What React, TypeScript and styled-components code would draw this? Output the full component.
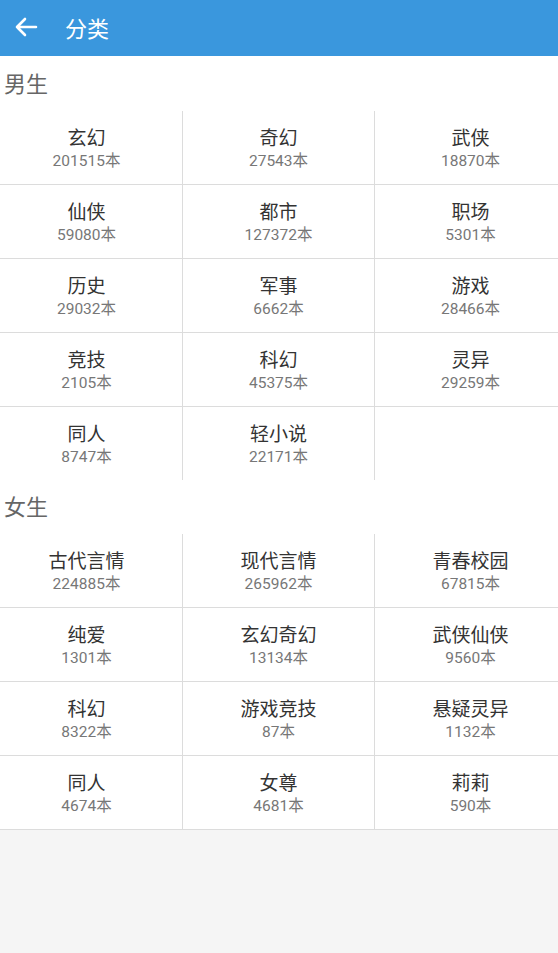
import React from "react";
import styled, { createGlobalStyle } from "styled-components";

const GlobalStyle = createGlobalStyle`
  html, body {
    margin: 0;
    padding: 0;
    background: #f5f5f5;
    font-family: Roboto, "Noto Sans CJK SC", sans-serif;
  }
`;

const sections = [
  {
    title: "男生",
    items: [
      ["玄幻", 201515],
      ["奇幻", 27543],
      ["武侠", 18870],
      ["仙侠", 59080],
      ["都市", 127372],
      ["职场", 5301],
      ["历史", 29032],
      ["军事", 6662],
      ["游戏", 28466],
      ["竞技", 2105],
      ["科幻", 45375],
      ["灵异", 29259],
      ["同人", 8747],
      ["轻小说", 22171],
    ],
  },
  {
    title: "女生",
    items: [
      ["古代言情", 224885],
      ["现代言情", 265962],
      ["青春校园", 67815],
      ["纯爱", 1301],
      ["玄幻奇幻", 13134],
      ["武侠仙侠", 9560],
      ["科幻", 8322],
      ["游戏竞技", 87],
      ["悬疑灵异", 1132],
      ["同人", 4674],
      ["女尊", 4681],
      ["莉莉", 590],
    ],
  },
];

const App = () => {
  return (
    <>
      <GlobalStyle />
      <Header>
        <BackButton>
          <svg width="24" height="20" viewBox="0 0 24 20">
            <path
              d="M22 10H3M11 2L3 10l8 8"
              fill="none"
              stroke="#fff"
              strokeWidth="2.6"
              strokeLinecap="round"
              strokeLinejoin="round"
            />
          </svg>
        </BackButton>
        <Title>分类</Title>
      </Header>
      <Content>
        {sections.map((section) => (
          <section key={section.title}>
            <SectionLabel>{section.title}</SectionLabel>
            <GridClip>
              <Grid>
                {section.items.map(([name, count]) => (
                  <Cell key={name as string}>
                    <CellName>{name}</CellName>
                    <CellCount>{count}本</CellCount>
                  </Cell>
                ))}
              </Grid>
            </GridClip>
          </section>
        ))}
      </Content>
    </>
  );
};

const Header = styled.header`
  height: 56px;
  background: #3a97dd;
  display: flex;
  align-items: center;
  padding: 0 14px;
  box-sizing: border-box;
`;

const BackButton = styled.button`
  border: none;
  background: none;
  padding: 0;
  width: 24px;
  height: 24px;
  display: flex;
  align-items: center;
  margin-top: -2px;
  cursor: pointer;
`;

const Title = styled.h1`
  margin: -3px 0 0 27px;
  font-size: 22px;
  font-weight: 400;
  color: #fff;
`;

const Content = styled.main`
  background: #fff;
  padding-top: 1px;
  border-bottom: 1px solid #dcdcdc;
  overflow: hidden;
`;

const SectionLabel = styled.h2`
  margin: 0;
  height: 54px;
  line-height: 56px;
  padding-left: 4px;
  font-size: 22px;
  font-weight: 400;
  color: #666;
`;

/* hides the bottom line of the last row in each group */
const GridClip = styled.div`
  overflow: hidden;
`;

const Grid = styled.div`
  display: grid;
  grid-template-columns: repeat(3, 192px);
  margin: 0 0 -1px -9px;
  width: 576px;
`;

const Cell = styled.div`
  height: 74px;
  box-sizing: border-box;
  padding-top: 2px;
  border-right: 1px solid #dcdcdc;
  border-bottom: 1px solid #dcdcdc;
  display: flex;
  flex-direction: column;
  align-items: center;
  justify-content: center;
`;

const CellName = styled.div`
  font-size: 19px;
  color: #333;
  line-height: 25px;
`;

const CellCount = styled.div`
  font-size: 15.5px;
  color: #777;
  line-height: 20px;
`;

export default App;
